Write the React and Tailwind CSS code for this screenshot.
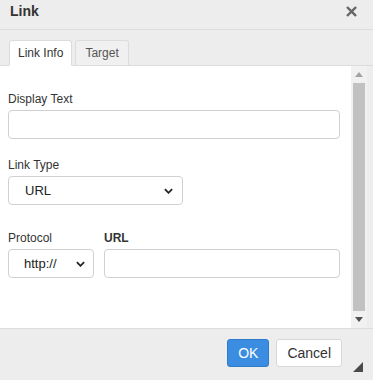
export default function App() {
  const font = { fontFamily: '"Liberation Sans", Arial, sans-serif' };

  return (
    <div className="w-[373px] h-[380px] bg-[#ededed] flex flex-col overflow-hidden text-[#333]" style={font}>
      {/* Header */}
      <div className="h-[30px] shrink-0 flex items-center justify-between pl-[10px] pr-[16px] border-b border-[#dcdcdc]">
        <span className="text-[14px] font-bold text-[#333] -mt-[6px]">Link</span>
        <svg className="w-[11px] h-[11px] -mt-[6px]" viewBox="0 0 12 12">
          <path d="M2 2 L10 10 M10 2 L2 10" stroke="#666" strokeWidth="2.6" strokeLinecap="square" />
        </svg>
      </div>

      {/* Tabs */}
      <div className="h-[36px] shrink-0 flex items-end pl-[9px] border-b border-[#dcdcdc]">
        <div className="h-[26px] -mb-px px-[8px] flex items-center bg-white border border-[#dcdcdc] border-b-white rounded-t-[3px] text-[12px] text-[#333]">
          Link Info
        </div>
        <div className="h-[25px] ml-[3px] px-[9px] flex items-center bg-[#f0f0f0] border border-[#dcdcdc] border-b-0 rounded-t-[3px] text-[12px] text-[#555]">
          Target
        </div>
      </div>

      {/* Body with scrollbar */}
      <div className="h-[262px] shrink-0 flex">
        <div className="w-[351px] bg-white pl-[8px] pr-[11px] pt-[26px]">
          <div className="text-[12px] leading-[15px] text-[#333]">Display Text</div>
          <div className="mt-[3px] h-[29px] border border-[#d0d0d0] rounded-[4px] bg-white"></div>

          <div className="mt-[19px] text-[12px] leading-[15px] text-[#333]">Link Type</div>
          <div className="mt-[3px] w-[175px] h-[29px] border border-[#d0d0d0] rounded-[4px] bg-white flex items-center justify-between pl-[16px] pr-[9px] text-[13px] text-[#222]">
            <span>URL</span>
            <svg className="w-[9px] h-[6px]" viewBox="0 0 10 6">
              <path d="M1 1 L5 5 L9 1" fill="none" stroke="#222" strokeWidth="2" />
            </svg>
          </div>

          <div className="mt-[26px] flex gap-[10px]">
            <div className="w-[86px]">
              <div className="text-[12px] leading-[15px] text-[#333]">Protocol</div>
              <div className="mt-[3px] h-[29px] border border-[#d0d0d0] rounded-[4px] bg-white flex items-center justify-between pl-[15px] pr-[8px] text-[13px] text-[#222]">
                <span>http://</span>
                <svg className="w-[9px] h-[6px]" viewBox="0 0 10 6">
                  <path d="M1 1 L5 5 L9 1" fill="none" stroke="#222" strokeWidth="2" />
                </svg>
              </div>
            </div>
            <div className="flex-1">
              <div className="text-[12px] leading-[15px] font-bold text-[#333]">URL</div>
              <div className="mt-[3px] h-[29px] border border-[#d0d0d0] rounded-[4px] bg-white"></div>
            </div>
          </div>
        </div>

        {/* Scrollbar */}
        <div className="w-[16px] bg-[#f1f1f1] flex flex-col items-center">
          <div className="h-[17px] flex items-center justify-center">
            <svg className="w-[8px] h-[5px]" viewBox="0 0 8 5">
              <path d="M0 5 L4 0 L8 5 Z" fill="#a3a3a3" />
            </svg>
          </div>
          <div className="w-[12px] flex-1 bg-[#c1c1c1]"></div>
          <div className="h-[17px] flex items-center justify-center">
            <svg className="w-[8px] h-[5px]" viewBox="0 0 8 5">
              <path d="M0 0 L8 0 L4 5 Z" fill="#505050" />
            </svg>
          </div>
        </div>
        <div className="flex-1"></div>
      </div>

      {/* Footer */}
      <div className="flex-1 border-t border-[#dcdcdc] flex flex-col">
        <div className="flex justify-end gap-[7px] pt-[10px] pr-[31px]">
          <button className="h-[28px] px-[10px] rounded-[3px] bg-[#3a8de0] border border-[#2f7bc9] text-white text-[14px]">
            OK
          </button>
          <button className="h-[28px] px-[10px] rounded-[3px] bg-white border border-[#d8d8d8] text-[#333] text-[14px]">
            Cancel
          </button>
        </div>
        <div className="flex justify-end pr-[10px] -mt-[5px]">
          <svg className="w-[10px] h-[10px]" viewBox="0 0 10 10">
            <path d="M10 0 L10 10 L0 10 Z" fill="#4a4a4a" />
          </svg>
        </div>
      </div>
    </div>
  );
}
